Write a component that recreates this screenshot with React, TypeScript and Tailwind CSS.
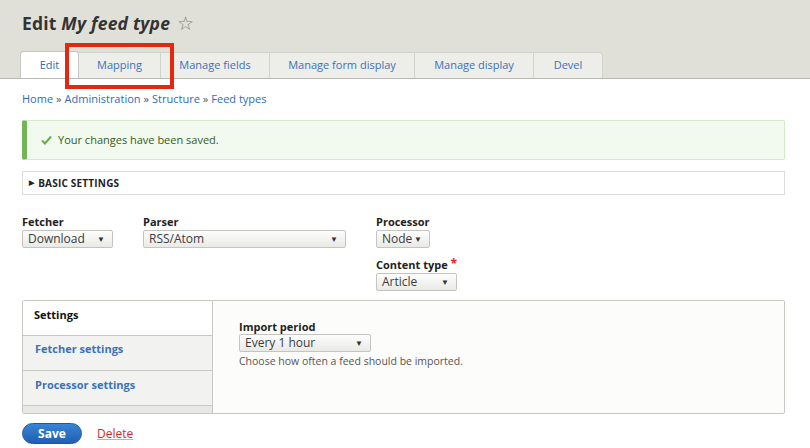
import React from 'react';

const tabs = [
  { name: 'Edit', w: 'w-[59px]', active: true },
  { name: 'Mapping', w: 'w-[82px]' },
  { name: 'Manage fields', w: 'w-[109px]' },
  { name: 'Manage form display', w: 'w-[145px]' },
  { name: 'Manage display', w: 'w-[119px]' },
  { name: 'Devel', w: 'w-[69px]' },
];

function Select({ value, width }: { value: string; width: string }) {
  return (
    <div
      className={`${width} h-[18px] flex items-center justify-between pl-[5px] pr-[7px] border border-[#c4c4c0] rounded-[2px] bg-gradient-to-b from-[#fdfdfc] to-[#e9e9e6] text-[12px] leading-none text-[#3c3c3c]`}
    >
      <span>{value}</span>
      <span className="text-[8px] text-[#333]">▼</span>
    </div>
  );
}

export default function App() {
  return (
    <div className="w-[810px] h-[448px] overflow-hidden bg-white relative font-['Open_Sans',sans-serif] text-[11px] text-[#222]">
      {/* Header */}
      <div className="h-[79px] bg-[#e0e0d8] border-b border-[#b9b9b4] flex flex-col">
        <div className="pl-[22px] pt-[11px] h-[52px] flex items-start">
          <h1 className="text-[17.5px] font-bold text-[#333] leading-[24px] tracking-[0.2px]">
            Edit <em className="italic">My feed type</em>
          </h1>
          <span className="ml-[7px] text-[19px] leading-[24px] text-[#7c7c78]">☆</span>
        </div>
        <div className="flex pl-[20px] h-[27px]">
          {tabs.map((t) =>
            t.active ? (
              <div
                key={t.name}
                className={`${t.w} h-[27px] -mb-px bg-white border border-b-0 border-[#c8c8c3] rounded-t-[4px] flex items-center justify-center text-[#2d6eb8] text-[11px]`}
              >
                {t.name}
              </div>
            ) : (
              <div
                key={t.name}
                className={`${t.w} h-[26px] mt-px bg-[#ededea] border-r border-t border-[#d2d2cd] last:rounded-tr-[4px] flex items-center justify-center text-[#3a72b8] text-[11px]`}
              >
                {t.name}
              </div>
            )
          )}
        </div>
      </div>

      {/* Red highlight */}
      <div className="absolute left-[65px] top-[43px] w-[109px] h-[46px] border-[4px] border-[#e2290f]" />

      <div className="pl-[22px] pr-[25px]">
        {/* Breadcrumb */}
        <div className="pt-[12px] h-[33px] text-[11px] text-[#555] flex gap-[3px]">
          <span className="text-[#2d6eb8]">Home</span>»
          <span className="text-[#2d6eb8]">Administration</span>»
          <span className="text-[#2d6eb8]">Structure</span>»
          <span className="text-[#2d6eb8]">Feed types</span>
        </div>

        {/* Message */}
        <div className="mt-[8px] h-[40px] bg-[#f2f9ee] border border-[#d4e9c8] border-l-[5px] border-l-[#74b356] rounded-[2px] flex items-center pl-[14px] gap-[6px] text-[11px] text-[#325e1c]">
          <svg width="11" height="10" viewBox="0 0 11 10">
            <path d="M1 5.5 L4 8.5 L10 1.5" fill="none" stroke="#6aae4a" strokeWidth="2" />
          </svg>
          <span>Your changes have been saved.</span>
        </div>

        {/* Basic settings */}
        <div className="mt-[11px] h-[24px] border border-[#dcdcd8] flex items-center pl-[6px] gap-[4px] text-[10px] font-bold text-[#222] tracking-[0.2px]">
          <span className="text-[7px]">▶</span>
          <span>BASIC SETTINGS</span>
        </div>

        {/* Plugin selects */}
        <div className="flex mt-[20px] h-[85px]">
          <div className="w-[121px] flex flex-col gap-[1px]">
            <label className="font-bold text-[11px] leading-[14px]">Fetcher</label>
            <Select value="Download" width="w-[91px]" />
          </div>
          <div className="w-[233px] flex flex-col gap-[1px]">
            <label className="font-bold text-[11px] leading-[14px]">Parser</label>
            <Select value="RSS/Atom" width="w-[203px]" />
          </div>
          <div className="flex flex-col">
            <div className="flex flex-col gap-[1px]">
              <label className="font-bold text-[11px] leading-[14px]">Processor</label>
              <Select value="Node" width="w-[54px]" />
            </div>
            <div className="flex flex-col gap-[1px] mt-[10px]">
              <label className="font-bold text-[11px] leading-[14px]">
                Content type <span className="text-[#e0242b] align-top text-[12px] leading-none">*</span>
              </label>
              <Select value="Article" width="w-[81px]" />
            </div>
          </div>
        </div>

        {/* Vertical tabs */}
        <div className="h-[114px] border border-[#c9c9c4] rounded-[2px] flex bg-[#fcfcfa]">
          <div className="w-[190px] flex flex-col bg-[#e8e8e4] border-r border-[#c9c9c4]">
            <div className="h-[35px] bg-white pl-[11px] pt-[6px] font-bold text-[11px] text-[#111] border-b border-[#c9c9c4]">
              Settings
            </div>
            <div className="h-[35px] bg-[#f2f2f0] pl-[12px] pt-[5px] font-bold text-[11px] text-[#3a72b8] border-b border-[#c9c9c4]">
              Fetcher settings
            </div>
            <div className="h-[35px] bg-[#f2f2f0] pl-[12px] pt-[6px] font-bold text-[11px] text-[#3a72b8] border-b border-[#c9c9c4]">
              Processor settings
            </div>
          </div>
          <div className="pl-[26px] pt-[19px] flex flex-col">
            <label className="font-bold text-[11px] leading-[14px] text-[#222]">Import period</label>
            <Select value="Every 1 hour" width="w-[132px]" />
            <div className="mt-[2px] text-[10.5px] text-[#555]">Choose how often a feed should be imported.</div>
          </div>
        </div>

        {/* Actions */}
        <div className="mt-[9px] flex items-center gap-[15px]">
          <button className="w-[60px] h-[21px] rounded-full bg-gradient-to-b from-[#3a84d6] to-[#1f5fb0] border border-[#1d58a6] text-white font-bold text-[12px] leading-none">
            Save
          </button>
          <span className="text-[#d12a2a] text-[12px] underline decoration-[#e8a0a0]">Delete</span>
        </div>
      </div>
    </div>
  );
}
